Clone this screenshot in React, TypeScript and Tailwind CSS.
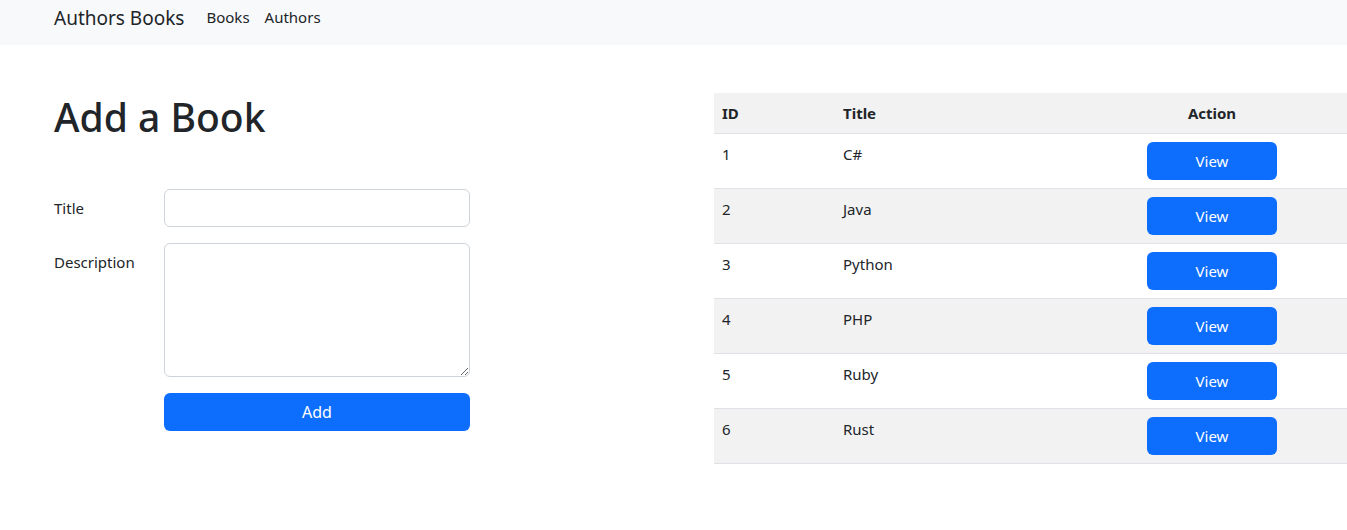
import { useState } from "react";

type Book = { id: number; title: string };

const books: Book[] = [
  { id: 1, title: "C#" },
  { id: 2, title: "Java" },
  { id: 3, title: "Python" },
  { id: 4, title: "PHP" },
  { id: 5, title: "Ruby" },
  { id: 6, title: "Rust" },
];

export default function App() {
  const [title, setTitle] = useState("");
  const [description, setDescription] = useState("");

  return (
    <div className="min-h-screen bg-white text-[#212529] font-['Noto_Sans',sans-serif] text-[15px]">
      {/* Navbar */}
      <nav className="h-[45px] bg-[#f8f9fa] pl-[54px] flex items-start">
        <a className="text-[19px] leading-[30px] pt-[3px] mr-[22px]">Authors Books</a>
        <a className="leading-[24px] pt-[5px] mr-[15px]">Books</a>
        <a className="leading-[24px] pt-[5px]">Authors</a>
      </nav>

      <div className="flex pl-[54px] pt-[48px]">
        {/* Form */}
        <div className="w-[660px] shrink-0">
          <h1 className="text-[39px] font-medium leading-[48px]">Add a Book</h1>
          <form className="mt-[48px] w-[416px] flex flex-col gap-[16px]" onSubmit={(e) => e.preventDefault()}>
            <div className="flex">
              <label className="w-[110px] pt-[7px] leading-[24px]">Title</label>
              <input
                value={title}
                onChange={(e) => setTitle(e.target.value)}
                className="w-[306px] h-[38px] border border-[#ced4da] rounded-[6px] px-3 outline-none"
              />
            </div>
            <div className="flex">
              <label className="w-[110px] pt-[7px] leading-[24px]">Description</label>
              <textarea
                value={description}
                onChange={(e) => setDescription(e.target.value)}
                className="w-[306px] h-[134px] border border-[#ced4da] rounded-[6px] px-3 py-1.5 outline-none"
              />
            </div>
            <div className="flex">
              <div className="w-[110px]" />
              <button className="w-[306px] h-[38px] bg-[#0d6efd] text-white rounded-[6px] text-[16px]">Add</button>
            </div>
          </form>
        </div>

        {/* Table */}
        <div className="flex-1">
          <table className="w-full border-collapse">
            <thead>
              <tr className="bg-[#f2f2f2] border-b border-[#dee2e6]">
                <th className="w-[121px] text-left font-bold px-2 py-2 leading-[24px]">ID</th>
                <th className="w-[242px] text-left font-bold px-2 py-2 leading-[24px]">Title</th>
                <th className="text-center font-bold px-2 py-2 leading-[24px]">Action</th>
              </tr>
            </thead>
            <tbody>
              {books.map((b, i) => (
                <tr key={b.id} className={`border-b border-[#dee2e6] ${i % 2 === 1 ? "bg-[#f2f2f2]" : "bg-white"}`}>
                  <td className="px-2 pt-[8px] pb-2 align-top leading-[24px]">{b.id}</td>
                  <td className="px-2 pt-[8px] pb-2 align-top leading-[24px]">{b.title}</td>
                  <td className="px-2 py-2 text-center align-top">
                    <button className="w-[130px] h-[38px] bg-[#0d6efd] text-white rounded-[6px]">View</button>
                  </td>
                </tr>
              ))}
            </tbody>
          </table>
        </div>
      </div>
    </div>
  );
}
